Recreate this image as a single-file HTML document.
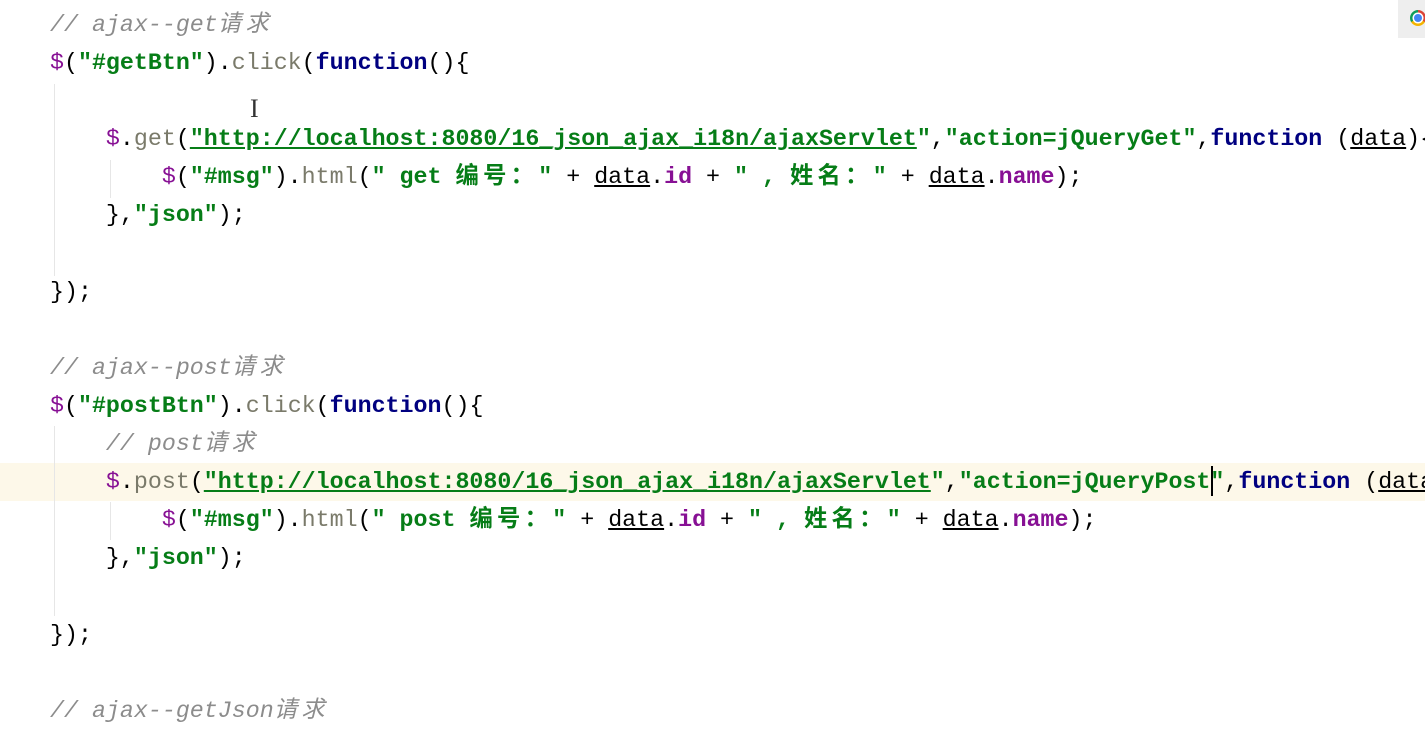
<!DOCTYPE html>
<html><head><meta charset="utf-8"><style>
html,body{margin:0;padding:0;background:#fff;width:1425px;height:705px;overflow:hidden}
.code{position:absolute;left:50px;top:6px;font-family:"Liberation Mono","Noto Sans CJK SC",monospace;font-size:23.3px;line-height:38.1px;white-space:pre;color:#000}
.c{color:#8c8c8c;font-style:italic}
.d{color:#871094}
.s{color:#067d17;font-weight:bold}
.k{color:#000080;font-weight:bold}
.m{color:#7a7a6a}
.f{color:#871094;font-weight:bold}
.u{text-decoration:underline}
.z{letter-spacing:4.3px}
.hl{position:absolute;left:0;top:463px;width:1425px;height:38px;background:#fdf8e9}
.g{position:absolute;width:1px;background:#e6e6e6}
.ic{position:absolute;left:1398px;top:0;width:27px;height:38px;background:#eee}
.ch{position:absolute;left:1410px;top:10px;width:16px;height:16px;border-radius:50%;background:conic-gradient(#db4437 0 120deg,#f4b400 120deg 240deg,#0f9d58 240deg 360deg)}
.ch:after{content:"";position:absolute;left:4px;top:4px;width:8px;height:8px;border-radius:50%;background:#4285f4;box-shadow:0 0 0 1.5px #fff}
.cur{position:absolute;left:1211px;top:466px;width:2px;height:30px;background:#000;z-index:5}
.ib{position:absolute;left:250px;top:96px;font-family:"Liberation Serif",serif;font-size:26px;line-height:26px;color:#333;z-index:5}
</style></head><body>
<div class="hl"></div>
<div class="g" style="left:54px;top:84px;height:192px"></div>
<div class="g" style="left:110px;top:160px;height:38px"></div>
<div class="g" style="left:54px;top:426px;height:190px"></div>
<div class="g" style="left:110px;top:502px;height:38px"></div>
<div class="ic"></div><div class="ch"></div>
<div class="ib">I</div>
<div class="code"><span class="c">// ajax--get<span class="z">请求</span></span>
<span class="d">$</span>(<span class="s">"#getBtn"</span>).<span class="m">click</span>(<span class="k">function</span>(){

    <span class="d">$</span>.<span class="m">get</span>(<span class="s"><span class="u">"http://localhost:8080/16_json_ajax_i18n/ajaxServlet</span>"</span>,<span class="s">"action=jQueryGet"</span>,<span class="k">function</span> (<span class="u">data</span>){
        <span class="d">$</span>(<span class="s">"#msg"</span>).<span class="m">html</span>(<span class="s">" get <span class="z">编号：</span>"</span> + <span class="u">data</span>.<span class="f">id</span> + <span class="s">" , <span class="z">姓名：</span>"</span> + <span class="u">data</span>.<span class="f">name</span>);
    },<span class="s">"json"</span>);

});

<span class="c">// ajax--post<span class="z">请求</span></span>
<span class="d">$</span>(<span class="s">"#postBtn"</span>).<span class="m">click</span>(<span class="k">function</span>(){
    <span class="c">// post<span class="z">请求</span></span>
    <span class="d">$</span>.<span class="m">post</span>(<span class="s"><span class="u">"http://localhost:8080/16_json_ajax_i18n/ajaxServlet</span>"</span>,<span class="s">"action=jQueryPost"</span>,<span class="k">function</span> (<span class="u">data</span>){
        <span class="d">$</span>(<span class="s">"#msg"</span>).<span class="m">html</span>(<span class="s">" post <span class="z">编号：</span>"</span> + <span class="u">data</span>.<span class="f">id</span> + <span class="s">" , <span class="z">姓名：</span>"</span> + <span class="u">data</span>.<span class="f">name</span>);
    },<span class="s">"json"</span>);

});

<span class="c">// ajax--getJson<span class="z">请求</span></span></div>
<div class="cur"></div>
</body></html>
